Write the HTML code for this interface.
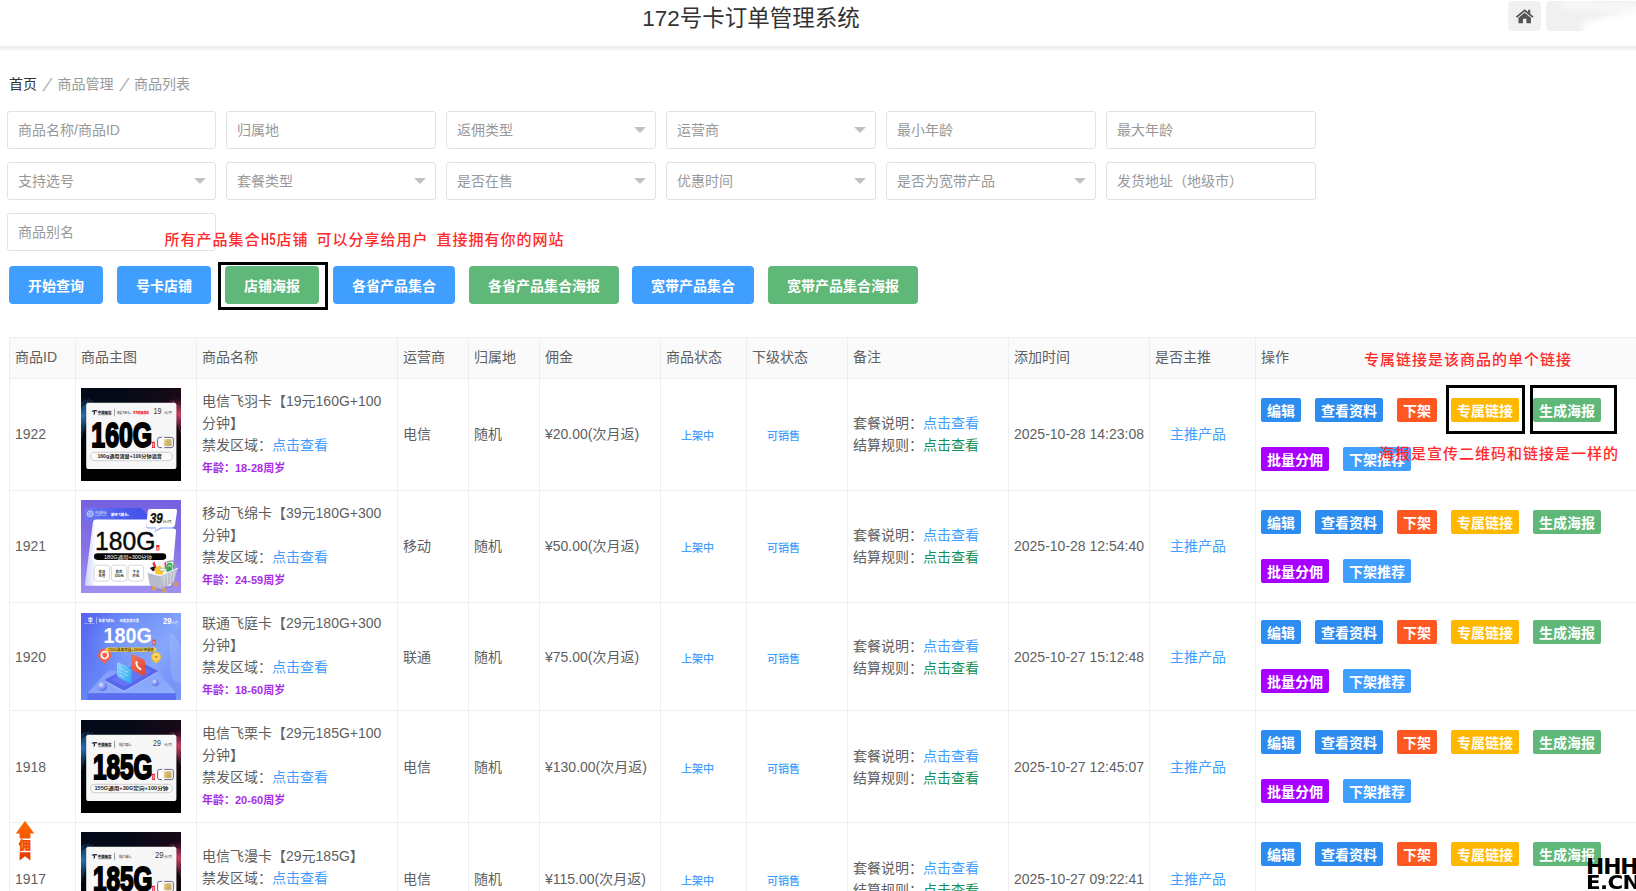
<!DOCTYPE html>
<html lang="zh-CN">
<head>
<meta charset="utf-8">
<title>172号卡订单管理系统</title>
<style>
*{box-sizing:border-box;margin:0;padding:0}
html,body{width:1636px;height:891px;overflow:hidden;background:#fff}
body{position:relative;font-family:"Liberation Sans","Noto Sans CJK SC",sans-serif;font-size:14px;color:#5f5f5f;line-height:22px}
a{text-decoration:none}
.abs{position:absolute}
/* header */
#hd{position:absolute;left:0;top:0;width:1636px;height:46px;background:#fff}
#hd:after{content:"";position:absolute;left:0;top:46px;width:1636px;height:5px;background:linear-gradient(#f3f4f5 0,#e9ebee 15%,#eff1f3 50%,#f8f9f9 100%)}
#title{position:absolute;left:0;top:4px;width:1502px;text-align:center;font-size:22.5px;line-height:30px;color:#333}
#home{position:absolute;left:1508px;top:1px;width:33px;height:30px;border-radius:4px;background:#f0f0f0}
#user{position:absolute;left:1546px;top:1px;width:96px;height:30px;border-radius:4px;background:#f0f0f0;overflow:hidden}
/* breadcrumb */
#bc{position:absolute;left:9px;top:73px;font-size:14px;line-height:22px;color:#999;white-space:nowrap}
#bc b{font-weight:normal;color:#333}
#bc i{font-style:normal;display:inline-block;width:20.5px;text-align:center;font-size:18px;line-height:22px;vertical-align:-1.5px;transform:skewX(-22deg);color:#aaa}
/* filters */
.inp{position:absolute;width:209px;height:38px;border:1px solid #e2e2e2;border-radius:3px;background:#fff;padding-left:10px;line-height:36px;font-size:14px;color:#999;white-space:nowrap}
.inp.sel:after{content:"";position:absolute;right:9px;top:15px;border:6px solid transparent;border-top-color:#c2c2c2;border-bottom-width:0}
/* buttons */
.btn{position:absolute;top:266px;height:38px;line-height:40px;border-radius:4px;background:#409eff;color:#fff;font-weight:bold;font-size:14px;text-align:center;white-space:nowrap}
.btn.g{background:#5fb878}
.box{position:absolute;border:3px solid #000}
.note{position:absolute;color:#ff2a2a;font-size:15px;line-height:20px;white-space:nowrap;font-family:"Liberation Sans","Noto Sans CJK SC",sans-serif;font-weight:500;letter-spacing:1px;word-spacing:2.8px}
.note b{font-weight:700;display:inline-block;width:16px;transform:scale(.72,1.06);transform-origin:0 60%;white-space:nowrap}
</style>
</head>
<body>
<div id="hd">
  <div id="title">172号卡订单管理系统</div>
  <div id="home"><svg class="abs" style="left:6.9px;top:6.8px" width="19.4" height="16.4" viewBox="0 0 18 16" preserveAspectRatio="none"><path d="M9 1.2 L0.8 8.3 L1.9 9.5 L9 3.4 L16.1 9.5 L17.2 8.3 L14.2 5.7 V1.6 H12.2 V4 Z" fill="#555"/><path d="M9 4.6 L3.2 9.6 V15 H7.4 V10.6 H10.6 V15 H14.8 V9.6 Z" fill="#555"/></svg></div>
  <div id="user"><div class="abs" style="left:16px;top:2px;width:90px;height:8px;background:#fff;opacity:.6;transform:rotate(3deg);filter:blur(3px)"></div><div class="abs" style="left:38px;top:12px;width:80px;height:30px;background:#fff;transform:rotate(-14deg);filter:blur(3px)"></div></div>
</div>

<div id="bc"><b>首页</b><i>/</i>商品管理<i>/</i>商品列表</div>

<div class="inp" style="left:7px;top:111px">商品名称/商品ID</div>
<div class="inp" style="left:226px;top:111px;width:210px">归属地</div>
<div class="inp sel" style="left:446px;top:111px;width:210px">返佣类型</div>
<div class="inp sel" style="left:666px;top:111px;width:210px">运营商</div>
<div class="inp" style="left:886px;top:111px;width:210px">最小年龄</div>
<div class="inp" style="left:1106px;top:111px;width:210px">最大年龄</div>

<div class="inp sel" style="left:7px;top:162px">支持选号</div>
<div class="inp sel" style="left:226px;top:162px;width:210px">套餐类型</div>
<div class="inp sel" style="left:446px;top:162px;width:210px">是否在售</div>
<div class="inp sel" style="left:666px;top:162px;width:210px">优惠时间</div>
<div class="inp sel" style="left:886px;top:162px;width:210px">是否为宽带产品</div>
<div class="inp" style="left:1106px;top:162px;width:210px">发货地址（地级市）</div>

<div class="inp" style="left:7px;top:213px">商品别名</div>
<div class="note" style="left:164.5px;top:229.8px">所有产品集合<b>H5</b>店铺 可以分享给用户 直接拥有你的网站</div>

<div class="btn" style="left:9px;width:94px">开始查询</div>
<div class="btn" style="left:117px;width:94px">号卡店铺</div>
<div class="btn g" style="left:225px;width:94px">店铺海报</div>
<div class="btn" style="left:333px;width:122px">各省产品集合</div>
<div class="btn g" style="left:469px;width:150px">各省产品集合海报</div>
<div class="btn" style="left:632px;width:122px">宽带产品集合</div>
<div class="btn g" style="left:768px;width:150px">宽带产品集合海报</div>
<div class="box" style="left:218px;top:262px;width:110px;height:48px"></div>

<style>
#tb{position:absolute;left:9px;top:337px;width:1700px;border-left:1px solid #eee;border-top:1px solid #eee}
#tb table{border-collapse:separate;border-spacing:0;table-layout:fixed;width:1696px}
#tb th,#tb td{border-right:1px solid #eee;border-bottom:1px solid #eee;padding:0 6px 2px 5px;text-align:left;font-weight:normal;vertical-align:middle;font-size:14px;line-height:22px;color:#5f5f5f;white-space:nowrap;overflow:hidden}
#tb th{height:41px;background:#fafafa;color:#5f5f5f}
#tb td{height:112px}
#tb tr.r3 td{height:108px}
#tb tr.r3 td,#tb tr.r4 td,#tb tr.r5 td{padding-bottom:0}
#tb td.nm{white-space:normal;word-break:break-all;padding-bottom:0}
.lk{color:#409eff}.gk{color:#159058}
.age{display:block;font-size:11px;line-height:24px;position:relative;top:0;font-weight:bold;color:#a62ee6}
.st{font-size:11px;font-weight:500;color:#409eff;position:relative;top:1.5px}
#tb td.pc,#tb td.oc{padding:0 6px}
.pic{display:block;width:100px;margin-left:-1px}
.ops{position:relative;height:73px;width:380px}
.ob{position:absolute;height:24px;line-height:26px;border-radius:2px;color:#fff;font-weight:bold;font-size:14px;text-align:center;background:#2d8cf0}
.o1{left:-1px;top:0;width:40px}.o2{left:53px;top:0;width:68px}.o3{left:135px;top:0;width:40px;background:#ff5722}
.o4{left:189px;top:0;width:68px;background:#ffb800}.o5{left:271px;top:0;width:68px;background:#5fb878}
.o6{left:-1px;top:49px;width:68px;background:#a800ff}.o7{left:81px;top:49px;width:68px;background:#409eff}
</style>
<div id="tb"><table>
<colgroup><col style="width:66px"><col style="width:121px"><col style="width:201px"><col style="width:71px"><col style="width:71px"><col style="width:121px"><col style="width:86px"><col style="width:101px"><col style="width:161px"><col style="width:141px"><col style="width:106px"><col style="width:450px"></colgroup>
<tr><th>商品ID</th><th>商品主图</th><th>商品名称</th><th>运营商</th><th>归属地</th><th>佣金</th><th>商品状态</th><th>下级状态</th><th>备注</th><th>添加时间</th><th>是否主推</th><th>操作</th></tr>

<tr class="r1"><td>1922</td><td class="pc"><!--IMG1--><svg class="pic" width="100" height="93" viewBox="0 0 100 93">
<defs>
<linearGradient id="a1bg" x1="0" y1="0" x2="1" y2="0"><stop offset="0" stop-color="#020d1c"/><stop offset=".45" stop-color="#070b1b"/><stop offset="1" stop-color="#1d0a1a"/></linearGradient>
<linearGradient id="a1dk" x1="0" y1="0" x2="0" y2="1"><stop offset="0" stop-color="#000" stop-opacity=".15"/><stop offset=".3" stop-color="#000" stop-opacity=".1"/><stop offset=".75" stop-color="#000" stop-opacity=".85"/><stop offset=".86" stop-color="#000" stop-opacity="1"/></linearGradient>
<radialGradient id="a1l" cx="0" cy=".3" r=".2"><stop offset="0" stop-color="#2b8ad8" stop-opacity=".8"/><stop offset="1" stop-color="#1a4a90" stop-opacity="0"/></radialGradient>
<radialGradient id="a1r" cx="1" cy=".28" r=".19"><stop offset="0" stop-color="#e8456a" stop-opacity=".9"/><stop offset="1" stop-color="#7a2040" stop-opacity="0"/></radialGradient>
<linearGradient id="a1chip" x1="0" y1="0" x2="1" y2="1"><stop offset="0" stop-color="#e9d59a"/><stop offset="1" stop-color="#c9a95c"/></linearGradient>
</defs>
<rect width="100" height="93" fill="url(#a1bg)"/>
<rect width="100" height="93" fill="url(#a1dk)"/>
<rect width="100" height="93" fill="url(#a1l)"/>
<rect width="100" height="93" fill="url(#a1r)"/>
<path d="M0 24 L8 11 M0 30 L7 13 M0 37 L6 16 M0 44 L6 21 M0 50 L6 28 M1 20 L12 12 M0 16 L5 12" stroke="#58b8f4" stroke-width=".4" opacity=".6"/>
<path d="M100 24 L92 12 M100 31 L93 15 M100 38 L94 19 M100 45 L94 25 M99 19 L89 12" stroke="#ff7f9c" stroke-width=".4" opacity=".65"/>
<rect x="5.2" y="14.8" width="90.2" height="66.2" rx="2.6" fill="#f7f7f7"/>
<path d="M10.2 23.4 Q13 21.2 16.6 22.4 L15.6 23.4 Q14.6 23 13.8 23.2 Q14.6 24.6 13.6 26.6 L12.4 26.6 Q13.4 24.8 12.6 23.6 Q11.4 23.6 10.2 23.4Z" fill="#1a1a2a"/>
<text x="16.8" y="26" font-size="3.9" font-weight="900" fill="#1a1a2a" font-family="'Liberation Sans','Noto Sans CJK SC',sans-serif" textLength="13.6" lengthAdjust="spacingAndGlyphs">中国电信</text>
<rect x="16.8" y="26.6" width="13.4" height=".5" fill="#555"/>
<rect x="33.4" y="20.8" width=".5" height="7.4" fill="#444"/>
<text x="36" y="25.8" font-size="2.9" font-weight="700" fill="#555" font-family="'Liberation Sans','Noto Sans CJK SC',sans-serif" textLength="14" lengthAdjust="spacingAndGlyphs">电信飞羽卡+</text>
<text x="52" y="25.9" font-size="3.1" font-weight="900" fill="#e8202a" font-family="'Liberation Sans','Noto Sans CJK SC',sans-serif" textLength="16" lengthAdjust="spacingAndGlyphs">京东超级权益</text>
<text x="72.6" y="26.1" font-size="8.8" fill="#3a3a3a" font-family="'Liberation Sans',sans-serif" textLength="8" lengthAdjust="spacingAndGlyphs">19</text>
<text x="83" y="26" font-size="3.4" fill="#444" font-family="'Liberation Sans','Noto Sans CJK SC',sans-serif" textLength="8.2" lengthAdjust="spacingAndGlyphs">元/月</text>
<text transform="translate(10.3 58.7) scale(0.7 1)" font-size="35.6" font-weight="700" fill="#000" stroke="#000" stroke-width="2" stroke-linejoin="miter" font-family="'Liberation Sans',sans-serif">160G</text>
<rect x="71" y="53.8" width="3" height="6.2" rx=".6" fill="#e8202a"/>
<text x="71.7" y="58.9" font-size="4.6" font-weight="700" fill="#fff" font-family="'Liberation Sans',sans-serif" textLength="1.7" lengthAdjust="spacingAndGlyphs">B</text>
<rect x="76.6" y="49.4" width="15.8" height="10.2" rx="2.2" fill="#fff" stroke="#3b3b72" stroke-width=".8"/>
<rect x="81" y="48.6" width="2.2" height="12" fill="#f7f7f7"/>
<rect x="83.2" y="51" width="7.4" height="7.2" rx="1" fill="url(#a1chip)"/>
<path d="M83.2 53.4H90.6M83.2 55.8H90.6M86.9 51V58.2" stroke="#b8964a" stroke-width=".35"/>
<rect x="9.5" y="64.3" width="82" height="8.4" rx="4.2" fill="#fafafa" stroke="#9a9a9a" stroke-width=".45"/>
<text x="16.4" y="70.2" font-size="4.6" font-weight="700" fill="#222" font-family="'Liberation Sans','Noto Sans CJK SC',sans-serif" textLength="64.6" lengthAdjust="spacingAndGlyphs">160g通用流量+100分钟语音</text>
</svg><!--/IMG1--></td>
<td class="nm">电信飞羽卡【19元160G+100分钟】<br>禁发区域：<a class="lk">点击查看</a><span class="age">年龄：18-28周岁</span></td>
<td>电信</td><td>随机</td><td>¥20.00(次月返)</td>
<td><span class="st" style="margin-left:15px">上架中</span></td><td><span class="st" style="margin-left:15px">可销售</span></td>
<td>套餐说明：<a class="lk">点击查看</a><br>结算规则：<a class="gk">点击查看</a></td>
<td>2025-10-28 14:23:08</td><td><a class="lk" style="margin-left:15px">主推产品</a></td>
<td class="oc"><div class="ops"><a class="ob o1">编辑</a><a class="ob o2">查看资料</a><a class="ob o3">下架</a><a class="ob o4">专属链接</a><a class="ob o5">生成海报</a><a class="ob o6">批量分佣</a><a class="ob o7">下架推荐</a></div></td></tr>

<tr class="r2"><td>1921</td><td class="pc"><!--IMG2--><svg class="pic" width="100" height="93" viewBox="0 0 100 93">
<defs>
<linearGradient id="b2bg" x1="0" y1="0" x2="0" y2="1"><stop offset="0" stop-color="#7760de"/><stop offset=".5" stop-color="#8672e6"/><stop offset="1" stop-color="#a090f2"/></linearGradient>
<linearGradient id="b2tab" x1="0" y1="0" x2="1" y2="0"><stop offset="0" stop-color="#6a78f4"/><stop offset=".6" stop-color="#4a58ee"/><stop offset="1" stop-color="#4450ea"/></linearGradient>
<linearGradient id="b2card" x1="0" y1="0" x2="1" y2="0"><stop offset="0" stop-color="#c9d0ff"/><stop offset=".12" stop-color="#fff"/><stop offset="1" stop-color="#fff"/></linearGradient>
<linearGradient id="b2cart" x1="0" y1="0" x2="1" y2="1"><stop offset="0" stop-color="#d8dbe6"/><stop offset="1" stop-color="#a9adbd"/></linearGradient>
</defs>
<rect width="100" height="93" fill="url(#b2bg)"/>
<path d="M6 7.8 H58 Q60 7.8 61.4 9.2 L72 20 V24 H11 L12 21 H3.8 V10 Q3.8 7.8 6 7.8Z" fill="url(#b2tab)"/>
<path d="M15 19.4 H66 L94 29 Q95.4 29.4 95 31 L90.4 84 Q90.2 85.8 88.4 85.8 H5.6 Q3.8 85.8 4 84 L12 21.6 Q12.4 19.4 15 19.4Z" fill="url(#b2card)"/>
<path d="M69.2 10 H93.8 Q96.4 10 96 12.4 L94 25.8 Q93.6 28.6 91 28.6 H80.4 L73.4 32 L75 28.6 H67.6 Q65 28.6 65.4 25.8 L66.8 12.2 Q67 10 69.2 10Z" fill="#5f86f4" opacity=".8"/>
<path d="M69.2 9 H93.8 Q96.4 9 96 11.4 L94 24.8 Q93.6 27.4 91 27.4 H79.4 L74.6 30.6 L75.2 27.4 H67.6 Q65 27.4 65.4 24.8 L66.8 11.2 Q67 9 69.2 9Z" fill="#fff"/>
<circle cx="9.2" cy="13.8" r="3" fill="none" stroke="#fff" stroke-width=".7" opacity=".9"/>
<path d="M7 13.8 Q9.2 11 11.4 13.8 Q9.2 16.6 7 13.8Z M9.2 11.4V16.2" fill="none" stroke="#fff" stroke-width=".5" opacity=".9"/>
<text x="14" y="13.6" font-size="3.2" fill="#e8ebff" font-family="'Liberation Sans','Noto Sans CJK SC',sans-serif" textLength="11.6" lengthAdjust="spacingAndGlyphs">中国移动</text>
<text x="14" y="16.2" font-size="1.9" fill="#dfe3ff" font-family="'Liberation Sans',sans-serif" textLength="11.6" lengthAdjust="spacingAndGlyphs">China Mobile</text>
<text x="30" y="15.5" font-size="3.9" font-weight="900" fill="#fff" font-family="'Liberation Sans','Noto Sans CJK SC',sans-serif" textLength="18" lengthAdjust="spacingAndGlyphs">移动飞绵卡+</text>
<text transform="translate(68.2 22.9) skewX(-8)" font-size="14" font-weight="700" fill="#111" stroke="#111" stroke-width=".35" font-family="'Liberation Sans',sans-serif" textLength="13" lengthAdjust="spacingAndGlyphs">39</text>
<text x="81.6" y="22.9" font-size="3.6" fill="#333" font-family="'Liberation Sans','Noto Sans CJK SC',sans-serif" textLength="9.2" lengthAdjust="spacingAndGlyphs">元/月</text>
<text x="14" y="50.2" font-size="25.4" fill="#0a0a0a" stroke="#0a0a0a" stroke-width=".45" font-family="'Liberation Sans',sans-serif" textLength="60.4" lengthAdjust="spacingAndGlyphs">180G</text>
<rect x="75.2" y="45" width="3.2" height="5.6" rx=".6" fill="#e8202a"/>
<text x="75.9" y="49.6" font-size="4.4" font-weight="700" fill="#fff" font-family="'Liberation Sans',sans-serif" textLength="1.8" lengthAdjust="spacingAndGlyphs">B</text>
<rect x="13" y="53.3" width="72.2" height="6.6" rx="3.3" fill="#050505"/>
<text x="23" y="58.5" font-size="4.9" fill="#fff" font-family="'Liberation Sans','Noto Sans CJK SC',sans-serif" textLength="48" lengthAdjust="spacingAndGlyphs">180G通用+300分钟</text>
<g fill="#fff" stroke="#a8a8ae" stroke-width=".45"><rect x="13.2" y="65.2" width="15.4" height="15.9" rx="2.6"/><rect x="30.4" y="65.2" width="15.4" height="15.9" rx="2.6"/><rect x="47.2" y="65.2" width="15.4" height="15.9" rx="2.6"/></g>
<g font-size="3.3" fill="#333" font-weight="700" font-family="'Liberation Sans','Noto Sans CJK SC',sans-serif">
<text x="17.6" y="72.6" textLength="6.6" lengthAdjust="spacingAndGlyphs">首月</text><text x="17.6" y="76.6" textLength="6.6" lengthAdjust="spacingAndGlyphs">免费</text>
<text x="34.6" y="72.6" textLength="6.8" lengthAdjust="spacingAndGlyphs">首充</text><text x="33.4" y="76.6" textLength="9.4" lengthAdjust="spacingAndGlyphs">100元</text>
<text x="51.6" y="72.6" textLength="6.6" lengthAdjust="spacingAndGlyphs">下卡</text><text x="51.6" y="76.6" textLength="6.6" lengthAdjust="spacingAndGlyphs">秒批</text>
</g>
<!-- cart -->
<path d="M86 62 L90.4 61 Q92.6 60.6 93 62.8 L94.6 72" fill="none" stroke="#9aa0b4" stroke-width="1.3" stroke-linecap="round"/>
<path d="M71.4 63.4 L73.4 61.2 L76.6 70 L74.6 71Z" fill="#e8324a"/>
<path d="M77 62 L83 60 L84.6 70 L78 71Z" fill="#f4f4f6"/>
<path d="M83.4 62.6 L85 61.8 L86 69 L84 70Z" fill="#e84a5a"/>
<path d="M85.4 66 Q86 62.4 89.4 62.8 Q92.4 63.6 91.4 67.6 L90 73 L85.6 72Z" fill="#2fae4e"/>
<path d="M86.8 67 Q87.4 64.6 89.2 65 Q90.4 65.6 90 67.4" fill="none" stroke="#e6ffe9" stroke-width=".8"/>
<path d="M68.8 68 L72.6 66.4 L75.6 68.8 L72 71.6Z" fill="#15151a"/>
<path d="M73.4 68.6 L78.8 65.4 L82.6 70 L82 75 L74.8 74.8Z" fill="#f8c620"/>
<ellipse cx="81.6" cy="69.6" rx="3.4" ry="1.5" fill="#fff2b8" stroke="#5fb0e8" stroke-width=".5"/>
<path d="M66.6 72.8 L79.4 75.8 L96.4 68.6 L93 82.2 L80 88.6 L69 85.2Z" fill="url(#b2cart)"/>
<path d="M66.6 72.8 L79.4 75.8 L80 88.6 L69 85.2Z" fill="#b6bacb"/>
<path d="M66.2 72.4 L79.4 75.6 L96.8 68.2" fill="none" stroke="#f2f3f8" stroke-width="1.1" stroke-linejoin="round"/>
<path d="M83 76 L83.4 86 M86.6 74.6 L86.6 84.6 M90 73 L89.6 83 M93.2 71.4 L92 81.4" stroke="#eceef5" stroke-width=".6"/>
<path d="M69.6 85.8 L71 88.4 L80.6 91 L94 85" fill="none" stroke="#8d92a6" stroke-width="1"/>
<ellipse cx="72.8" cy="88.6" rx="1.7" ry="2.1" fill="#f2a630"/><circle cx="72.8" cy="88.6" r=".5" fill="#5a6fd0"/>
<ellipse cx="83.2" cy="90.4" rx="1.9" ry="2.3" fill="#f2a630"/><circle cx="83.2" cy="90.4" r=".55" fill="#5a6fd0"/>
<ellipse cx="94.8" cy="84" rx="1.6" ry="2" fill="#f2a630"/><circle cx="94.8" cy="84" r=".5" fill="#5a6fd0"/>
</svg><!--/IMG2--></td>
<td class="nm">移动飞绵卡【39元180G+300分钟】<br>禁发区域：<a class="lk">点击查看</a><span class="age">年龄：24-59周岁</span></td>
<td>移动</td><td>随机</td><td>¥50.00(次月返)</td>
<td><span class="st" style="margin-left:15px">上架中</span></td><td><span class="st" style="margin-left:15px">可销售</span></td>
<td>套餐说明：<a class="lk">点击查看</a><br>结算规则：<a class="gk">点击查看</a></td>
<td>2025-10-28 12:54:40</td><td><a class="lk" style="margin-left:15px">主推产品</a></td>
<td class="oc"><div class="ops"><a class="ob o1">编辑</a><a class="ob o2">查看资料</a><a class="ob o3">下架</a><a class="ob o4">专属链接</a><a class="ob o5">生成海报</a><a class="ob o6">批量分佣</a><a class="ob o7">下架推荐</a></div></td></tr>

<tr class="r3"><td>1920</td><td class="pc"><!--IMG3--><svg class="pic" width="100" height="87" viewBox="0 0 100 87">
<defs>
<linearGradient id="c3bg" x1="0" y1="0" x2="1" y2=".55"><stop offset="0" stop-color="#5463f0"/><stop offset=".45" stop-color="#6585f6"/><stop offset=".8" stop-color="#86a6fb"/><stop offset="1" stop-color="#7896f8"/></linearGradient>
<radialGradient id="c3glow" cx=".5" cy=".3" r=".45"><stop offset="0" stop-color="#8fb0ff" stop-opacity=".55"/><stop offset="1" stop-color="#8fb0ff" stop-opacity="0"/></radialGradient>
<linearGradient id="c3top" x1="0" y1="0" x2="1" y2="1"><stop offset="0" stop-color="#7f9cfa"/><stop offset="1" stop-color="#90aefc"/></linearGradient>
<linearGradient id="c3red" x1="0" y1="0" x2="1" y2="1"><stop offset="0" stop-color="#f4735c"/><stop offset="1" stop-color="#e04430"/></linearGradient>
<linearGradient id="c3cy" x1="0" y1="0" x2="1" y2="1"><stop offset="0" stop-color="#8fd6ff"/><stop offset="1" stop-color="#2aa8f0"/></linearGradient>
<radialGradient id="c3sp" cx=".35" cy=".3" r=".7"><stop offset="0" stop-color="#dfe6ff"/><stop offset=".5" stop-color="#8f9cf6"/><stop offset="1" stop-color="#5e6be6"/></radialGradient>
</defs>
<rect width="100" height="87" fill="url(#c3bg)"/>
<rect width="100" height="87" fill="url(#c3glow)"/>
<path d="M88 20 Q100 24 100 40 V70 Q92 70 90 60 Z" fill="#a9c0ff" opacity=".35"/>
<!-- platform -->
<path d="M6.4 80.2 L27 57.4 H76 L95 80.2 Z" fill="url(#c3top)"/>
<rect x="6.4" y="80.2" width="88.6" height="6.8" fill="#5a6ef2"/>
<!-- phone slab -->
<path d="M24.4 67.4 L58 50.6 Q59.4 50 60.6 50.8 L76 58.6 Q77 59.4 75.8 60.2 L44.4 78.2 Q43 79 41.6 78.2 L24.6 69 Q23.4 68.2 24.4 67.4Z" fill="#a9b9fb"/>
<path d="M24.4 66.2 L58 49.4 Q59.4 48.8 60.6 49.6 L76 57.4 Q77 58.2 75.8 59 L44.4 77 Q43 77.8 41.6 77 L24.6 67.8 Q23.4 67 24.4 66.2Z" fill="#5766ec"/>
<path d="M30 66.4 L58.4 52.4 L70.6 58.4 L43.2 73.6Z" fill="#6575f2"/>
<!-- cards -->
<path d="M36 51 Q36 48.6 38 49.6 L49 55.2 Q50.6 56 50.6 57.8 V69 Q50.6 71.2 48.6 70.2 L37.6 64.4 Q36 63.6 36 61.8Z" fill="url(#c3cy)"/>
<path d="M38.4 55 l4 2 m1.4 .8 l3.6 1.8 M38.4 58.6 l2.6 1.3 m1.6 .8 l4.4 2.2 M38.4 62 l5 2.5" stroke="#d8f2ff" stroke-width=".7" opacity=".85"/>
<path d="M50.2 43.6 Q50.2 40.8 52.6 41.8 L62.4 46.6 Q64 47.4 64 49.4 V61 Q64 63.4 61.8 62.4 L51.8 57.4 Q50.2 56.6 50.2 54.6Z" fill="url(#c3red)"/>
<path d="M54.6 48.4 Q55.6 47.4 56.4 48.6 L56.8 50 Q56.8 50.8 56.2 50.8 Q56.6 53 58.4 54.6 Q59 54.2 59.6 54.8 L60.4 56.2 Q60.6 57.4 59.4 57.2 Q55 55.6 54.4 49.6 Q54.3 48.8 54.6 48.4Z" fill="#fff"/>
<!-- pins -->
<path d="M23.7 50.8 L19.2 46.6 A6.5 6.5 0 1 1 28.2 46.6Z" fill="#f2604e"/>
<circle cx="23.7" cy="42" r="4.2" fill="#fff"/>
<path d="M21.4 40.2 L23.7 39.4 L26 40.2 V42.6 Q26 44.2 23.7 45 Q21.4 44.2 21.4 42.6Z" fill="#f2604e"/>
<path d="M75.2 50.4 L71.8 47.4 A4.8 4.8 0 1 1 78.6 47.4Z" fill="#f7c52a"/>
<circle cx="75.2" cy="43.8" r="3.2" fill="#fbe07a"/>
<path d="M75.2 45.8 L73.4 44 Q72.8 42.6 74.2 42.4 Q74.9 42.4 75.2 43 Q75.5 42.4 76.2 42.4 Q77.6 42.6 77 44Z" fill="#f09020"/>
<circle cx="21.5" cy="73.5" r="4.6" fill="url(#c3sp)"/>
<circle cx="74.4" cy="69.8" r="3.5" fill="url(#c3sp)"/>
<!-- header -->
<g fill="none" stroke="#fff" stroke-width=".8" opacity=".95"><path d="M9.4 4 V9.6 M7 5.4 H11.8 M7.6 8.2 H11.2"/><circle cx="9.4" cy="6.8" r="1.7"/></g>
<text x="3.4" y="10.6" font-size="1.7" fill="#e9eeff" font-family="'Liberation Sans',sans-serif" textLength="10" lengthAdjust="spacingAndGlyphs">China unicom</text>
<rect x="15.5" y="3.8" width=".45" height="7" fill="#fff" opacity=".9"/>
<text x="17.8" y="9.4" font-size="3.4" font-weight="700" fill="#fff" font-family="'Liberation Sans','Noto Sans CJK SC',sans-serif" textLength="16" lengthAdjust="spacingAndGlyphs">联通飞庭卡+</text>
<text x="38.6" y="9.4" font-size="3.4" font-weight="700" fill="#f2f5ff" font-family="'Liberation Sans','Noto Sans CJK SC',sans-serif" textLength="19.4" lengthAdjust="spacingAndGlyphs">无限宽容优惠</text>
<text x="82" y="10.7" font-size="8.6" font-weight="700" fill="#fff" font-family="'Liberation Sans',sans-serif" textLength="8.4" lengthAdjust="spacingAndGlyphs">29</text>
<text x="90.4" y="10.6" font-size="3" fill="#eef2ff" font-family="'Liberation Sans','Noto Sans CJK SC',sans-serif" textLength="6.4" lengthAdjust="spacingAndGlyphs">元/月</text>
<text x="22.6" y="30.3" font-size="21.6" font-weight="700" fill="#fff" font-family="'Liberation Sans',sans-serif" textLength="48.4" lengthAdjust="spacingAndGlyphs">180G</text>
<rect x="71.6" y="26.4" width="3" height="5.6" rx="1" fill="#e83a3a"/>
<text x="72.3" y="31" font-size="4.2" font-weight="700" fill="#ffd9d2" font-family="'Liberation Sans',sans-serif" textLength="1.6" lengthAdjust="spacingAndGlyphs">B</text>
<rect x="24.3" y="34.4" width="51.2" height="4.3" rx="2.1" fill="#f3cf45"/>
<text x="27" y="37.9" font-size="3.5" font-weight="700" fill="#5a4a10" font-family="'Liberation Sans','Noto Sans CJK SC',sans-serif" textLength="46" lengthAdjust="spacingAndGlyphs">150G通用流量+300分钟语音</text>
</svg><!--/IMG3--></td>
<td class="nm">联通飞庭卡【29元180G+300分钟】<br>禁发区域：<a class="lk">点击查看</a><span class="age">年龄：18-60周岁</span></td>
<td>联通</td><td>随机</td><td>¥75.00(次月返)</td>
<td><span class="st" style="margin-left:15px">上架中</span></td><td><span class="st" style="margin-left:15px">可销售</span></td>
<td>套餐说明：<a class="lk">点击查看</a><br>结算规则：<a class="gk">点击查看</a></td>
<td>2025-10-27 15:12:48</td><td><a class="lk" style="margin-left:15px">主推产品</a></td>
<td class="oc"><div class="ops"><a class="ob o1">编辑</a><a class="ob o2">查看资料</a><a class="ob o3">下架</a><a class="ob o4">专属链接</a><a class="ob o5">生成海报</a><a class="ob o6">批量分佣</a><a class="ob o7">下架推荐</a></div></td></tr>

<tr class="r4"><td>1918</td><td class="pc"><!--IMG4--><svg class="pic" width="100" height="93" viewBox="0 0 100 93">
<defs>
<linearGradient id="a4bg" x1="0" y1="0" x2="1" y2="0"><stop offset="0" stop-color="#020d1c"/><stop offset=".45" stop-color="#070b1b"/><stop offset="1" stop-color="#1d0a1a"/></linearGradient>
<linearGradient id="a4dk" x1="0" y1="0" x2="0" y2="1"><stop offset="0" stop-color="#000" stop-opacity=".15"/><stop offset=".3" stop-color="#000" stop-opacity=".1"/><stop offset=".75" stop-color="#000" stop-opacity=".85"/><stop offset=".86" stop-color="#000" stop-opacity="1"/></linearGradient>
<radialGradient id="a4l" cx="0" cy=".3" r=".2"><stop offset="0" stop-color="#2b8ad8" stop-opacity=".8"/><stop offset="1" stop-color="#1a4a90" stop-opacity="0"/></radialGradient>
<radialGradient id="a4r" cx="1" cy=".28" r=".19"><stop offset="0" stop-color="#e8456a" stop-opacity=".9"/><stop offset="1" stop-color="#7a2040" stop-opacity="0"/></radialGradient>
<linearGradient id="a4chip" x1="0" y1="0" x2="1" y2="1"><stop offset="0" stop-color="#e9d59a"/><stop offset="1" stop-color="#c9a95c"/></linearGradient>
</defs>
<rect width="100" height="93" fill="url(#a4bg)"/>
<rect width="100" height="93" fill="url(#a4dk)"/>
<rect width="100" height="93" fill="url(#a4l)"/>
<rect width="100" height="93" fill="url(#a4r)"/>
<path d="M0 24 L8 11 M0 30 L7 13 M0 37 L6 16 M0 44 L6 21 M0 50 L6 28 M1 20 L12 12 M0 16 L5 12" stroke="#58b8f4" stroke-width=".4" opacity=".6"/>
<path d="M100 24 L92 12 M100 31 L93 15 M100 38 L94 19 M100 45 L94 25 M99 19 L89 12" stroke="#ff7f9c" stroke-width=".4" opacity=".65"/>
<rect x="5.2" y="14.8" width="90.2" height="66.2" rx="2.6" fill="#f7f7f7"/>
<path d="M10.2 23.4 Q13 21.2 16.6 22.4 L15.6 23.4 Q14.6 23 13.8 23.2 Q14.6 24.6 13.6 26.6 L12.4 26.6 Q13.4 24.8 12.6 23.6 Q11.4 23.6 10.2 23.4Z" fill="#1a1a2a"/>
<text x="16.8" y="26" font-size="3.9" font-weight="900" fill="#1a1a2a" font-family="'Liberation Sans','Noto Sans CJK SC',sans-serif" textLength="13.6" lengthAdjust="spacingAndGlyphs">中国电信</text>
<rect x="16.8" y="26.6" width="13.4" height=".5" fill="#555"/>
<rect x="33.4" y="20.8" width=".5" height="7.4" fill="#444"/>
<text x="38" y="25.8" font-size="2.9" font-weight="700" fill="#555" font-family="'Liberation Sans','Noto Sans CJK SC',sans-serif" textLength="12.4" lengthAdjust="spacingAndGlyphs">电信飞栗卡+</text>
<text x="72" y="26.1" font-size="8.8" fill="#3a3a3a" font-family="'Liberation Sans',sans-serif" textLength="7.8" lengthAdjust="spacingAndGlyphs">29</text>
<text x="83" y="26" font-size="3.4" fill="#444" font-family="'Liberation Sans','Noto Sans CJK SC',sans-serif" textLength="8.2" lengthAdjust="spacingAndGlyphs">元/月</text>
<text transform="translate(11.9 58.7) scale(0.685 1)" font-size="35.6" font-weight="700" fill="#000" stroke="#000" stroke-width="2" stroke-linejoin="miter" font-family="'Liberation Sans',sans-serif">185G</text>
<rect x="71" y="53.8" width="3" height="6.2" rx=".6" fill="#e8202a"/>
<text x="71.7" y="58.9" font-size="4.6" font-weight="700" fill="#fff" font-family="'Liberation Sans',sans-serif" textLength="1.7" lengthAdjust="spacingAndGlyphs">B</text>
<rect x="76.6" y="49.4" width="15.8" height="10.2" rx="2.2" fill="#fff" stroke="#3b3b72" stroke-width=".8"/>
<rect x="81" y="48.6" width="2.2" height="12" fill="#f7f7f7"/>
<rect x="83.2" y="51" width="7.4" height="7.2" rx="1" fill="url(#a4chip)"/>
<path d="M83.2 53.4H90.6M83.2 55.8H90.6M86.9 51V58.2" stroke="#b8964a" stroke-width=".35"/>
<rect x="9.5" y="64.3" width="82" height="8.4" rx="4.2" fill="#fafafa" stroke="#9a9a9a" stroke-width=".45"/>
<text x="13.4" y="70.2" font-size="4.6" font-weight="700" fill="#222" font-family="'Liberation Sans','Noto Sans CJK SC',sans-serif" textLength="74" lengthAdjust="spacingAndGlyphs">155G通用+30G定向+100分钟</text>
</svg><!--/IMG4--></td>
<td class="nm">电信飞栗卡【29元185G+100分钟】<br>禁发区域：<a class="lk">点击查看</a><span class="age">年龄：20-60周岁</span></td>
<td>电信</td><td>随机</td><td>¥130.00(次月返)</td>
<td><span class="st" style="margin-left:15px">上架中</span></td><td><span class="st" style="margin-left:15px">可销售</span></td>
<td>套餐说明：<a class="lk">点击查看</a><br>结算规则：<a class="gk">点击查看</a></td>
<td>2025-10-27 12:45:07</td><td><a class="lk" style="margin-left:15px">主推产品</a></td>
<td class="oc"><div class="ops"><a class="ob o1">编辑</a><a class="ob o2">查看资料</a><a class="ob o3">下架</a><a class="ob o4">专属链接</a><a class="ob o5">生成海报</a><a class="ob o6">批量分佣</a><a class="ob o7">下架推荐</a></div></td></tr>

<tr class="r5"><td>1917</td><td class="pc"><!--IMG5--><svg class="pic" width="100" height="93" viewBox="0 0 100 93">
<defs>
<linearGradient id="a5bg" x1="0" y1="0" x2="1" y2="0"><stop offset="0" stop-color="#020d1c"/><stop offset=".45" stop-color="#070b1b"/><stop offset="1" stop-color="#1d0a1a"/></linearGradient>
<linearGradient id="a5dk" x1="0" y1="0" x2="0" y2="1"><stop offset="0" stop-color="#000" stop-opacity=".15"/><stop offset=".3" stop-color="#000" stop-opacity=".1"/><stop offset=".75" stop-color="#000" stop-opacity=".85"/><stop offset=".86" stop-color="#000" stop-opacity="1"/></linearGradient>
<radialGradient id="a5l" cx="0" cy=".3" r=".2"><stop offset="0" stop-color="#2b8ad8" stop-opacity=".8"/><stop offset="1" stop-color="#1a4a90" stop-opacity="0"/></radialGradient>
<radialGradient id="a5r" cx="1" cy=".28" r=".19"><stop offset="0" stop-color="#e8456a" stop-opacity=".9"/><stop offset="1" stop-color="#7a2040" stop-opacity="0"/></radialGradient>
<linearGradient id="a5chip" x1="0" y1="0" x2="1" y2="1"><stop offset="0" stop-color="#e9d59a"/><stop offset="1" stop-color="#c9a95c"/></linearGradient>
</defs>
<rect width="100" height="93" fill="url(#a5bg)"/>
<rect width="100" height="93" fill="url(#a5dk)"/>
<rect width="100" height="93" fill="url(#a5l)"/>
<rect width="100" height="93" fill="url(#a5r)"/>
<path d="M0 24 L8 11 M0 30 L7 13 M0 37 L6 16 M0 44 L6 21 M0 50 L6 28 M1 20 L12 12 M0 16 L5 12" stroke="#58b8f4" stroke-width=".4" opacity=".6"/>
<path d="M100 24 L92 12 M100 31 L93 15 M100 38 L94 19 M100 45 L94 25 M99 19 L89 12" stroke="#ff7f9c" stroke-width=".4" opacity=".65"/>
<rect x="5.2" y="14.8" width="90.2" height="66.2" rx="2.6" fill="#f7f7f7"/>
<path d="M10.2 23.4 Q13 21.2 16.6 22.4 L15.6 23.4 Q14.6 23 13.8 23.2 Q14.6 24.6 13.6 26.6 L12.4 26.6 Q13.4 24.8 12.6 23.6 Q11.4 23.6 10.2 23.4Z" fill="#1a1a2a"/>
<text x="16.8" y="26" font-size="3.9" font-weight="900" fill="#1a1a2a" font-family="'Liberation Sans','Noto Sans CJK SC',sans-serif" textLength="13.6" lengthAdjust="spacingAndGlyphs">中国电信</text>
<rect x="16.8" y="26.6" width="13.4" height=".5" fill="#555"/>
<rect x="33.4" y="20.8" width=".5" height="7.4" fill="#444"/>
<text x="38" y="25.8" font-size="2.9" font-weight="700" fill="#555" font-family="'Liberation Sans','Noto Sans CJK SC',sans-serif" textLength="12.4" lengthAdjust="spacingAndGlyphs">电信飞漫卡+</text>
<text x="74" y="26.1" font-size="8.8" fill="#3a3a3a" font-family="'Liberation Sans',sans-serif" textLength="8.6" lengthAdjust="spacingAndGlyphs">29</text>
<text x="83" y="26" font-size="3.4" fill="#444" font-family="'Liberation Sans','Noto Sans CJK SC',sans-serif" textLength="8.2" lengthAdjust="spacingAndGlyphs">元/月</text>
<text transform="translate(11.9 58.7) scale(0.685 1)" font-size="35.6" font-weight="700" fill="#000" stroke="#000" stroke-width="2" stroke-linejoin="miter" font-family="'Liberation Sans',sans-serif">185G</text>
<rect x="71" y="53.8" width="3" height="6.2" rx=".6" fill="#e8202a"/>
<text x="71.7" y="58.9" font-size="4.6" font-weight="700" fill="#fff" font-family="'Liberation Sans',sans-serif" textLength="1.7" lengthAdjust="spacingAndGlyphs">B</text>
<rect x="76.6" y="49.4" width="15.8" height="10.2" rx="2.2" fill="#fff" stroke="#3b3b72" stroke-width=".8"/>
<rect x="81" y="48.6" width="2.2" height="12" fill="#f7f7f7"/>
<rect x="83.2" y="51" width="7.4" height="7.2" rx="1" fill="url(#a5chip)"/>
<path d="M83.2 53.4H90.6M83.2 55.8H90.6M86.9 51V58.2" stroke="#b8964a" stroke-width=".35"/>
<rect x="9.5" y="64.3" width="82" height="8.4" rx="4.2" fill="#fafafa" stroke="#9a9a9a" stroke-width=".45"/>
<text x="13.4" y="70.2" font-size="4.6" font-weight="700" fill="#222" font-family="'Liberation Sans','Noto Sans CJK SC',sans-serif" textLength="74" lengthAdjust="spacingAndGlyphs">155G通用+30G定向+100分钟</text>
</svg><!--/IMG5--></td>
<td class="nm">电信飞漫卡【29元185G】<br>禁发区域：<a class="lk">点击查看</a><span class="age">年龄：20-60周岁</span></td>
<td>电信</td><td>随机</td><td>¥115.00(次月返)</td>
<td><span class="st" style="margin-left:15px">上架中</span></td><td><span class="st" style="margin-left:15px">可销售</span></td>
<td>套餐说明：<a class="lk">点击查看</a><br>结算规则：<a class="gk">点击查看</a></td>
<td>2025-10-27 09:22:41</td><td><a class="lk" style="margin-left:15px">主推产品</a></td>
<td class="oc"><div class="ops"><a class="ob o1">编辑</a><a class="ob o2">查看资料</a><a class="ob o3">下架</a><a class="ob o4">专属链接</a><a class="ob o5">生成海报</a><a class="ob o6">批量分佣</a><a class="ob o7">下架推荐</a></div></td></tr>
</table></div>

<div class="note" style="left:1364px;top:349.8px">专属链接是该商品的单个链接</div>
<div class="note" style="left:1379px;top:444px">海报是宣传二维码和链接是一样的</div>
<div class="box" style="left:1446px;top:385px;width:79px;height:49px"></div>
<div class="box" style="left:1530px;top:385px;width:87px;height:49px"></div>
<svg class="abs" style="left:14px;top:819px" width="22" height="44" viewBox="0 0 22 44">
<defs><linearGradient id="arw" gradientUnits="userSpaceOnUse" x1="0" y1="2" x2="0" y2="42"><stop offset="0" stop-color="#ff6a00"/><stop offset=".5" stop-color="#f55400"/><stop offset="1" stop-color="#de3400"/></linearGradient></defs>
<path d="M11 1.8 L20.2 14.6 H16.4 V19.4 H5.6 V14.6 H1.8 Z" fill="url(#arw)"/>
<path d="M5.6 33.2 H16.4 V41.4 L11 37.2 L5.6 41.4 Z" fill="url(#arw)"/>
<rect x="6.4" y="21.2" width="10" height="10.4" fill="#f04c00" opacity=".5"/>
<text x="4.6" y="30.6" font-size="12.4" font-weight="900" fill="#ee4a00" font-family="'Liberation Sans','Noto Sans CJK SC',sans-serif" textLength="12.4" lengthAdjust="spacingAndGlyphs">佣</text>
</svg>
<div class="abs" id="wm" style="left:1586px;top:854.5px;width:60px;font-family:'DejaVu Sans','Liberation Sans',sans-serif;font-weight:bold;color:#000;white-space:nowrap"><div style="font-size:21.8px;line-height:24px;letter-spacing:-1.1px">HHH</div><div style="font-size:20.2px;line-height:20px;margin-top:-6.4px;letter-spacing:-.6px;transform:scaleX(1.06);transform-origin:0 0">E.CN</div></div>



</body>
</html>
